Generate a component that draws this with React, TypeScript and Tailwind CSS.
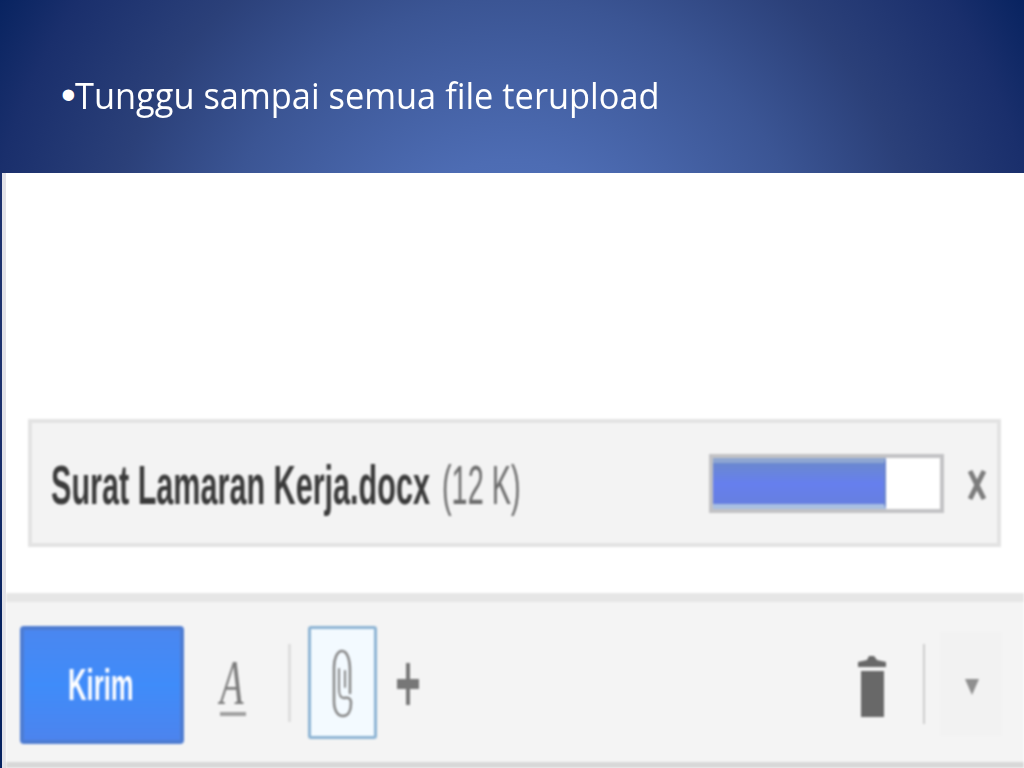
import React from 'react';

function SendButton() {
  return (
    <button className="w-[164px] h-[118px] shrink-0 rounded-[4px] border-4 border-[#4d7cd2] bg-linear-to-b from-[#4a87f0] via-[#3f8cfa] to-[#4c84ee] flex items-center justify-center">
      <span className="w-[69px] h-[60px] flex items-center">
        <span className="block origin-left scale-x-[0.57] whitespace-nowrap text-[45px] leading-[60px] font-bold text-white">Kirim</span>
      </span>
    </button>
  );
}

function PaperclipIcon() {
  return (
    <svg width="26" height="72" viewBox="0 0 26 72" fill="none" stroke="#868686" strokeWidth="2.5" strokeLinecap="round">
      <path d="M20 46 V24 C20 12 17 4 12 4 C7 4 4 12 4 20 V54 C4 64 8 69 13 69 C18 69 21 64 21 56 C21 51 18 50 14 51" />
      <path d="M9 22 V42 C9 48 11 51 14 51 M15 24 V40" strokeWidth="2" />
    </svg>
  );
}

function TrashIcon() {
  return (
    <svg width="30" height="66" viewBox="0 0 30 66" fill="#686868">
      <path d="M1 8 L10 6 L12 2 H17 L20 6 L29 8 V13 H1 Z" />
      <rect x="4" y="17" width="23" height="46" />
    </svg>
  );
}

function Attachment() {
  return (
    <div className="ml-[26px] mt-[246px] w-[973px] h-[128px] border-4 border-[#e3e3e3] bg-[#f3f3f3] flex items-center">
      <div className="ml-[19px] w-[391px] shrink-0 pt-[3px]">
        <span className="block origin-left scale-x-[0.546] whitespace-nowrap text-[56px] leading-[64px] font-bold text-[#3a3a3a]">Surat Lamaran Kerja.docx</span>
      </div>
      <div className="w-[80px] shrink-0 pt-[3px]">
        <span className="block origin-left scale-x-[0.515] whitespace-nowrap text-[56px] leading-[64px] text-[#6c6c6c]">(12 K)</span>
      </div>
      <div className="ml-[187px] w-[235px] h-[59px] shrink-0 border-4 border-[#c2c2c4] bg-white">
        <div className="w-[173px] h-full border-t-[5px] border-b-[5px] border-r-2 border-t-[#8ea6d2] border-b-[#a9c0e2] border-r-[#6a84cc] bg-linear-to-b from-[#6b88cf] via-[#667fee] to-[#667fe0]" />
      </div>
      <svg className="ml-[24px] mt-[4px] shrink-0" width="18" height="32" viewBox="0 0 18 32" stroke="#7c7c7c" strokeWidth="5">
        <path d="M2 2 L16 30 M16 2 L2 30" />
      </svg>
    </div>
  );
}

function Toolbar() {
  return (
    <div className="h-[175px] border-t-[9px] border-t-[#e6e6e6] border-b-[6px] border-b-[#d8d8d8] bg-[#f4f4f4] flex items-start">
      <div className="ml-[14px] mt-[24px]">
        <SendButton />
      </div>
      <div className="ml-[36px] mt-[53px] w-[26px] flex flex-col">
        <span className="block h-[55px] origin-left scale-x-[0.6] whitespace-nowrap font-['Liberation_Serif',serif] italic text-[64px] leading-[55px] text-[#7c7c7c]">A</span>
        <span className="block h-[4px] w-[26px] mt-[2px] bg-[#a0a0a0]" />
      </div>
      <div className="ml-[42px] mt-[42px] w-[3px] h-[78px] bg-[#dedede]" />
      <div className="ml-[17px] mt-[24px] w-[69px] h-[113px] rounded-[3px] border-[3px] border-[#8db4d4] bg-[#f3faff] flex items-center justify-center">
        <PaperclipIcon />
      </div>
      <svg className="ml-[19px] mt-[60px]" width="25" height="44" viewBox="0 0 25 44" fill="#777">
        <rect x="10" y="1" width="4" height="42" />
        <rect x="1" y="17" width="22" height="10" />
      </svg>
      <div className="ml-auto mt-[52px]">
        <TrashIcon />
      </div>
      <div className="ml-[36px] mt-[42px] w-[2px] h-[80px] bg-[#cdcdcd]" />
      <div className="ml-[15px] mr-[22px] mt-[30px] w-[62px] h-[104px] bg-[#f2f2f2] flex items-center justify-center">
        <svg className="ml-[2px] mt-[6px]" width="16" height="18" viewBox="0 0 16 18" fill="#8f8f8f">
          <path d="M1 1 H15 L8 17 Z" />
        </svg>
      </div>
    </div>
  );
}

export default function App() {
  return (
    <main className="w-[1024px] h-[768px] overflow-hidden flex flex-col font-['Liberation_Sans',sans-serif] bg-[radial-gradient(circle_at_512px_300px,#5578c2_0px,#4d6cb3_140px,#3b5594_300px,#2b4079_410px,#1a2f6c_527px,#06225f_600px)]">
      <header className="h-[173px] shrink-0 pl-[61px] pt-[71px]">
        <h1 className="flex items-center whitespace-nowrap leading-[50px] text-white">
          <span className="block w-[14px] h-[50px] font-['Liberation_Sans',sans-serif] text-[42px] leading-[48px]">•</span>
          <span className="block origin-left scale-x-[0.955] font-['Open_Sans',sans-serif] text-[36px] leading-[50px]">Tunggu sampai semua file terupload</span>
        </h1>
      </header>
      <section className="ml-[2px] h-[595px] shrink-0 border-l-4 border-l-[#e2e2e8] bg-white flex flex-col">
        <div className="h-[420px] shrink-0 -ml-1 blur-[1.2px]">
          <Attachment />
        </div>
        <div className="blur-[1.2px]">
          <Toolbar />
        </div>
      </section>
    </main>
  );
}
